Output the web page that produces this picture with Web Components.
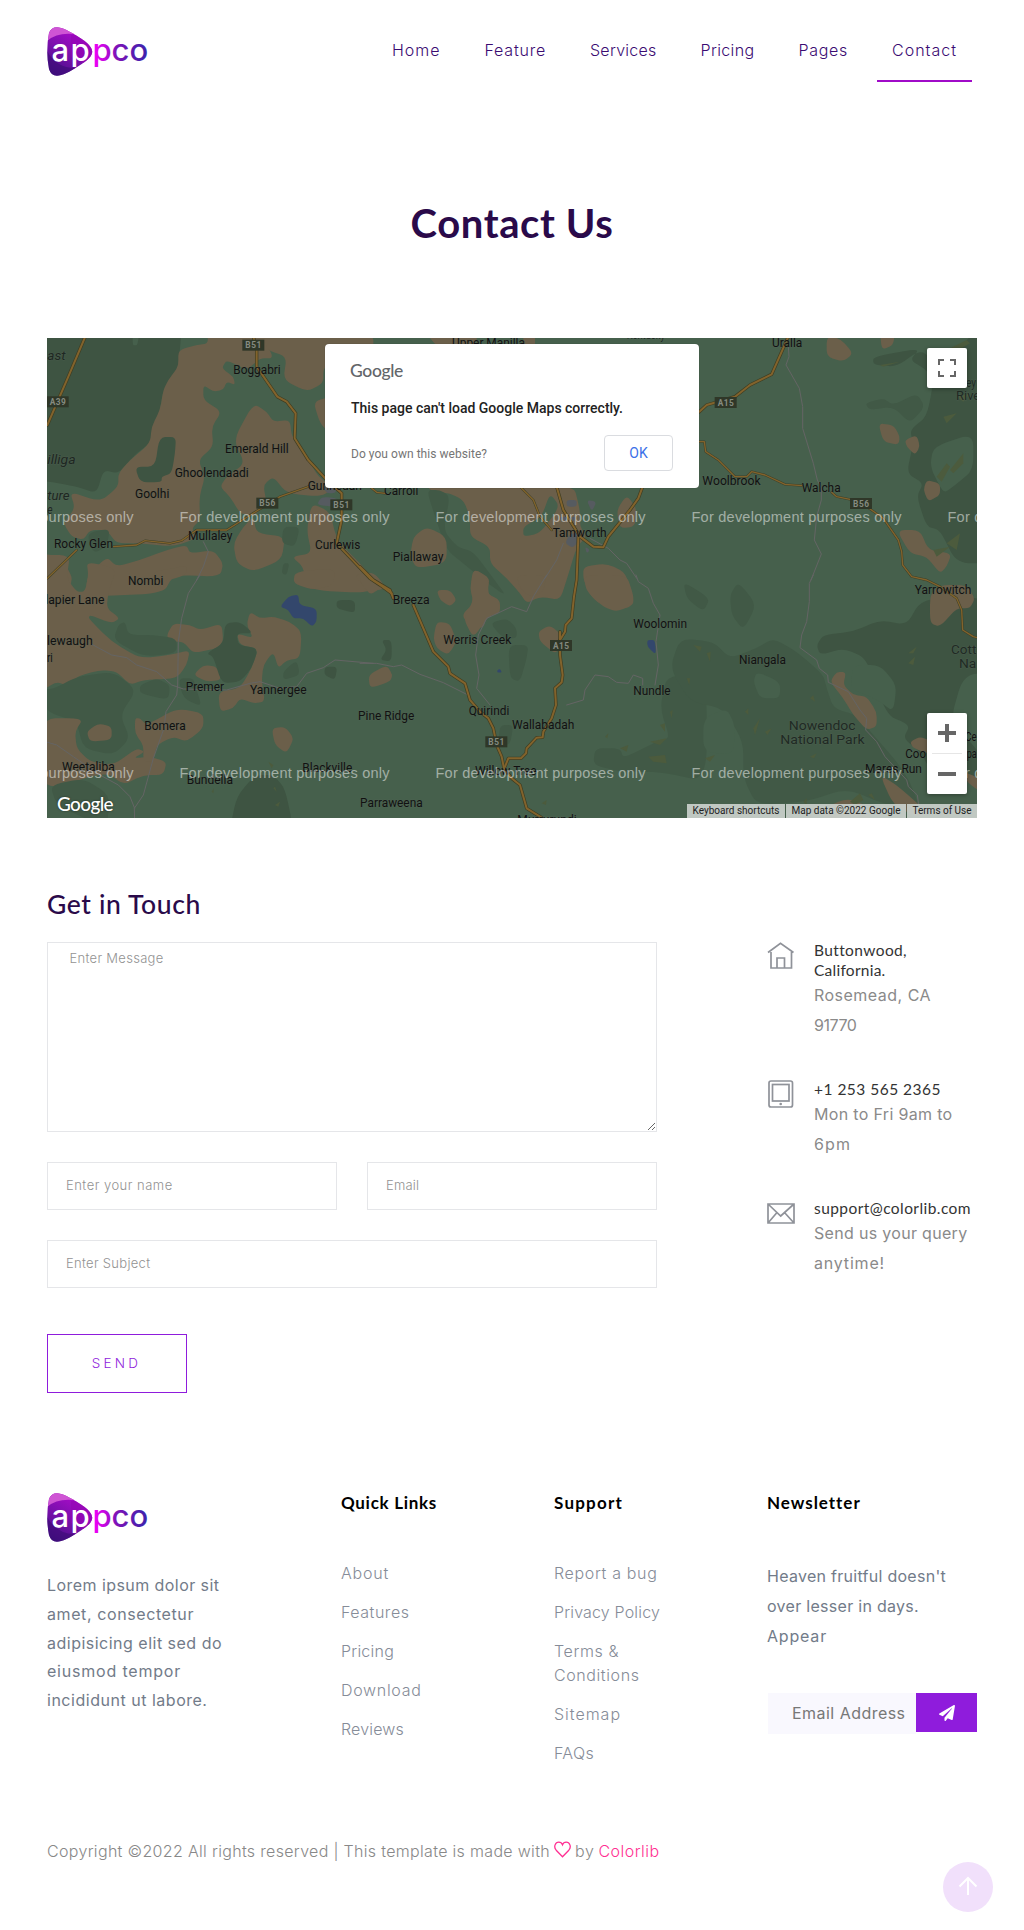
<!DOCTYPE html>
<html lang="en">
<head>
<meta charset="utf-8">
<title>Appco | Contact</title>
<style>
html,body{margin:0;background:#fff}
body{width:1024px;height:1930px;position:relative;overflow:hidden;font:300 16px/30px Inter,"Noto Sans",sans-serif;color:#888}
</style>
</head>
<body>
<contact-page></contact-page>
<script>
const define = (name, html, ready) => customElements.define(name, class extends HTMLElement {
  constructor() {
    super();
    const t = document.createElement('template');
    t.innerHTML = html;
    this.attachShadow({mode: 'open'}).append(t.content.cloneNode(true));
  }
  connectedCallback() { if (ready) ready(this, this.shadowRoot); }
});

/* ---------- map artwork: six tiles, three drawing units per pixel ---------- */
const TILE = {A:[40,330],B:[360,330],C:[680,330],D:[40,575],E:[360,575],F:[680,575]};
const DARK='#3e5442', SHADE='#415946', GREEN='#46604c', TAN='#6b5f4a', BLUE='#33476c', TOWN='#565b60', OLIVE='#4c5b3d';
const LAND = [
 ['A',DARK,'-200 -200 440 -200 420 60 410 140 370 180 360 240 340 290 330 340 290 370 270 390 235 430 190 420 170 490 110 470 0 450 -200 450'],
 ['A',TAN,'500 0 505 40 470 45 415 60 415 110 385 150 370 180 360 240 335 290 330 340 270 390 235 430 235 470 180 515 90 485 105 535 70 580 95 620 130 630 150 600 200 600 230 640 300 640 400 650 470 625 455 595 480 570 478 500 495 440 475 390 520 350 515 290 545 245 490 210 490 165 520 185 550 180 560 155 585 165 580 140 545 115 560 90 620 120 660 85 700 85 680 40 670 0'],
 ['A',TAN,'670 0 680 60 740 80 730 150 800 185 850 160 850 115 890 80 1000 90 1000 0'],
 ['A',TAN,'640 220 680 245 700 275 750 270 755 320 800 380 835 440 885 475 840 500 740 490 700 440 670 465 680 520 640 560 600 550 570 500 540 470 560 440 615 400 580 330'],
 ['A',TAN,'580 640 610 590 640 560 650 610 735 620 725 690 640 725 590 700'],
 ['A',TAN,'815 520 870 545 890 630 990 730 1000 790 800 780 790 710 755 680 815 670 800 600'],
 ['A',TAN,'140 740 200 680 230 710 300 690 380 660 440 645 450 670 520 660 550 700 540 740 400 735 370 790 140 800'],
 ['A',TAN,'0 670 65 680 105 760 0 860'],
 ['A',TAN,'820 215 870 200 870 310 840 280'],
 ['A',DARK,'358 322 408 320 405 370 395 430 365 440 365 457 300 457 285 410 345 410'],
 ['A',SHADE,'140 610 210 595 200 650 160 670'],['A',SHADE,'730 590 780 590 765 650 725 640'],['A',SHADE,'730 700 748 700 740 735 725 730'],
 ['A',GREEN,'278 10 298 10 292 46 278 46'],
 ['A',TOWN,'845 500 895 505 880 530 830 525'],['A',TOWN,'850 470 895 470 885 490 860 490'],
 ['D',TAN,'0 -60 90 -60 80 10 110 50 135 50 145 0 140 -40 230 -20 205 50 200 100 240 130 215 145 150 120 145 130 215 200 300 250 390 240 450 225 440 270 410 310 310 315 270 330 230 290 180 285 110 305 90 335 50 320 0 350'],
 ['D',TAN,'340 -10 400 -20 440 -30 440 0 350 25'],
 ['D',TAN,'380 180 400 145 450 150 480 165 545 145 550 200 530 220 460 235 430 200 390 200'],
 ['D',TAN,'460 300 490 270 530 275 545 315 500 320'],
 ['D',TAN,'620 150 630 110 660 130 700 125 750 140 785 170 780 250 740 255 715 280 700 230 670 270 665 320 675 380 640 385 600 370 580 400 540 410 535 350 600 340 635 280 655 220 600 210 590 175 640 190'],
 ['D',DARK,'555 145 600 140 640 175 590 175 595 210 655 220 635 280 600 320 545 325 520 245 500 235 550 205'],
 ['D',SHADE,'235 150 255 140 265 180 340 180 410 190 410 235 310 245 220 195'],['D',SHADE,'45 340 110 305 220 290 290 345 240 420 270 490 220 540 130 520 110 440 20 410 0 345'],
 ['D',SHADE,'300 330 350 310 390 330 385 375 300 355'],['D',SHADE,'415 310 460 310 470 345 485 395 430 370'],['D',SHADE,'730 290 770 255 780 300 730 315'],
 ['D',DARK,'855 275 892 275 885 315 853 300'],['D',DARK,'890 75 945 75 945 115 890 100'],
 ['D',TAN,'0 430 130 430 105 470 110 520 150 560 220 570 290 520 315 530 280 550 330 545 380 560 370 600 310 600 250 630 200 590 0 650'],
 ['D',TAN,'285 430 300 430 320 450 410 400 490 415 490 460 440 500 400 485 350 510 340 560 310 560 310 510 285 475'],
 ['D',TAN,'140 470 175 445 215 455 215 495 150 500'],['D',TAN,'695 460 735 455 762 490 740 535 705 510'],
 ['D',TAN,'765 -10 885 -20 880 30 820 45 760 25'],['D',TAN,'940 0 1000 -10 1040 40 990 50'],
 ['D',DARK,'645 600 700 600 735 640 760 760 570 760 590 665'],['D',SHADE,'30 630 130 610 210 660 200 760 50 690'],
 ['D',BLUE,'720 95 745 65 775 58 778 90 830 100 830 140 815 155 790 130 760 130 745 105'],
 ['B',TAN,'190 0 350 0 350 45 240 60'],['B',TAN,'490 0 525 0 525 60 490 50'],
 ['B',TAN,'200 470 640 460 660 540 660 590 680 620 650 650 620 750 600 810 540 800 500 820 480 790 440 745 390 700 390 650 330 620 330 560 310 510 270 490 220 485'],
 ['B',GREEN,'570 490 600 530 540 610 490 620 490 590 545 560'],
 ['B',SHADE,'200 480 240 480 270 500 250 600 290 650 340 665 400 745 440 800 370 750 310 700 260 660 225 560'],
 ['B',TAN,'160 620 200 590 260 620 260 700 170 715 150 680'],
 ['B',TAN,'770 540 800 495 830 535 825 590 780 595'],
 ['B',TAN,'670 710 740 700 800 730 820 830 760 840 700 810 670 750'],
 ['B',TAN,'340 715 390 745 380 790 420 810 420 850 380 860 370 895 330 890 305 855 340 820'],
 ['B',TOWN,'620 510 650 510 650 530 620 530'],['B',TOWN,'680 510 710 515 695 545'],['B',TOWN,'600 560 650 560 640 575 600 570'],['B',TOWN,'630 610 670 610 640 655 615 640'],['B',TOWN,'675 650 690 660 680 670'],
 ['E',TAN,'0 -10 60 10 60 40 30 60 0 20'],['E',TAN,'230 45 270 45 290 75 270 95 240 75'],['E',TAN,'230 140 270 145 290 200 265 240 230 220 220 190'],
 ['E',TAN,'25 300 80 270 98 300 90 320 30 340'],['E',TAN,'340 -20 385 10 385 60 415 80 420 105 380 130 340 190 310 130 340 80 330 40'],
 ['E',TAN,'470 0 560 0 550 50 510 65 480 40'],['E',TAN,'670 0 800 0 820 60 820 90 770 110 730 95 680 50'],['E',TAN,'535 170 570 150 605 180 590 240 540 200'],
 ['E',SHADE,'390 145 440 130 470 160 470 190 430 190'],['E',SHADE,'445 210 505 210 500 250 480 320 450 310'],['E',DARK,'65 195 95 195 95 260 60 255 80 225'],
 ['E',SHADE,'420 450 460 450 450 510 415 510'],['E',SHADE,'920 300 1040 310 1040 620 900 590 780 590 700 570 705 520 780 520 790 550 890 500 930 490 900 400'],
 ['E',BLUE,'862 195 885 195 888 240 862 215'],['E',BLUE,'412 285 420 282 426 292 412 293'],
 ['C',DARK,'890 0 820 70 760 90 720 60 650 110 580 105 580 80 720 55 690 90 740 120 760 160 740 260 690 300 700 340 680 430 730 460 710 500 740 590 780 600 830 700 960 700 960 0'],
 ['C',SHADE,'555 220 610 205 640 225 710 190 735 230 690 280 640 230 570 240'],['C',GREEN,'760 350 880 310 880 420 820 470 790 490 750 410'],
 ['C',TAN,'440 20 480 25 520 70 490 95 440 80'],['C',TAN,'600 0 645 0 640 45 605 60'],['C',TAN,'595 280 640 285 660 320 655 345 610 335'],['C',TAN,'675 330 710 315 720 350 705 375 680 350'],['C',TAN,'740 450 780 460 780 495 745 515 730 480'],
 ['C',TAN,'650 600 720 600 745 660 815 670 800 710 780 730 740 680 690 670'],
 ['F',DARK,'410 210 430 180 520 170 600 135 680 150 720 80 820 60 960 80 960 290 850 300 810 440 890 520 960 640 760 600 720 530 670 490 690 450 620 420 560 250 490 220 420 240'],
 ['F',SHADE,'0 190 100 200 150 250 230 220 280 190 350 230 430 300 440 340 460 400 530 420 580 480 650 560 690 620 720 700 620 690 500 640 380 680 230 690 190 610 190 500 130 400 30 380 -30 280'],
 ['F',GREEN,'220 320 230 290 300 320 300 370 240 370'],['F',GREEN,'70 430 140 400 165 450 160 540 70 530'],
 ['F',SHADE,'150 60 175 20 230 90 190 165 155 120'],['F',SHADE,'10 20 90 70 70 110 20 70'],
 ['F',GREEN,'520 270 600 270 650 330 640 410 600 380 560 360 510 340'],
 ['F',TAN,'750 60 780 30 860 30 885 70 870 100 830 100 780 155 750 145'],
 ['F',TAN,'450 320 470 290 498 292 490 330 520 360 560 365 590 410 590 455 560 465 520 420 490 370'],
 ['F',TAN,'690 500 720 485 760 500 760 540 700 520'],['F',TAN,'600 600 650 630 740 710 720 730 640 690'],['F',TAN,'430 700 500 670 560 690 570 740 430 740'],['F',TAN,'850 590 900 610 900 650 860 620'],
];
const SHARDS = [
 ['C','780 70 860 30 870 40 800 80'],['C','830 200 870 190 850 215'],['C','770 440 800 400 810 410 785 455'],['C','810 420 850 370 850 400 820 430'],['C','800 640 840 610 830 660'],['C','760 660 810 650 770 680'],['C','600 105 660 95 610 110'],['C','790 260 830 250 800 280'],
 ['F','685 235 710 215 700 235'],['F','685 265 705 245 700 270'],['F','40 210 65 215 60 230'],['F','80 235 92 230 90 260'],['F','20 310 30 310 28 330'],['F','195 410 205 400 205 420'],['F','220 460 240 430 225 480'],['F','255 470 275 460 262 480'],['F','390 370 400 360 405 380'],['F','75 550 105 540 90 560'],['F','390 545 410 535 402 550'],['F','510 680 540 655 550 675 525 690'],['F','565 660 575 655 585 675'],['F','370 680 380 670 380 690'],
 ['E','870 500 920 490 900 510'],['E','865 545 915 540 920 565 880 560'],['E','900 450 915 445 915 470'],['E','780 520 805 510 800 530'],['E','735 485 745 475 742 490'],['E','930 410 938 405 935 430'],['E','545 685 560 675 558 690'],
 ['D','685 560 700 570 695 580'],['D','700 640 705 635 710 650'],['D','705 690 720 680 715 695'],['D','515 650 522 640 520 655'],
];
const MINOR = [
 ['A','490 635 505 665 490 710 470 750'],['D','480 0 445 55 425 130 415 200 413 330 410 360 378 410 372 460 340 550 310 660 283 700 284 740'],
 ['D','150 205 215 240 260 248 290 270 350 290 395 330 430 342 560 345 630 325 660 320 720 340 770 335 800 295 850 278 885 255 1000 265'],
 ['D','0 495 50 510 100 545 180 600 235 630 270 665 284 700'],
 ['E','0 265 50 265 100 275 125 270 180 298 250 323 320 358'],['E','560 0 520 65 500 110 455 95 380 130 355 180 347 240 357 300 350 340 390 390'],
 ['E','828 0 835 20 865 40 880 85 900 120 888 200 895 270 885 330'],['E','620 390 670 375 675 345 705 300 745 305 770 322 805 325 820 300 848 310 848 330'],
 ['B','610 640 590 690 555 745'],['B','690 625 745 655 780 690 800 700 830 745'],
 ['C','325 50 327 80 318 105 358 175 368 230 368 295 400 400 412 450 424 475 424 510 410 560 403 630 424 672 393 750'],
 ['F','400 0 388 25 388 80 380 140 365 180 360 218 410 255 418 280 443 300 445 322 505 350 540 405 560 430 557 465 590 500 615 545 680 615 685 635 712 660 720 720'],
];
const MAJOR = [
 ['A','134 24 85 140 22 285'],['A','640 20 650 60 650 110 712 200 740 215 767 250 764 325 805 390 860 450 905 490 905 570 890 640 990 745 1020 765 1055 790'],
 ['B','590 470 610 540 660 620 700 650 730 652 745 620 810 540 835 505 848 470'],['B','655 620 650 750 642 800 635 865 617 885 615 905 600 930'],
 ['B','0 710 40 750 90 780 100 805'],
 ['C','58 245 80 225 165 200 210 165 275 133 325 20'],
 ['E','160 90 220 230 265 275 270 295 315 325 330 375 360 410 385 430 400 460 410 510 425 545 432 580 455 610 480 630 500 700 545 728'],
 ['E','600 170 600 240 608 300 605 322 585 340 588 390 575 430 550 470 548 487 530 488 500 520 498 535 483 550 445 550 435 575'],
];
const MIDDLE = [
 ['A','22 745 110 660'],['A','220 650 290 645 315 632 390 640 425 632 470 600 560 600 655 540 720 500 805 470'],
 ['B','480 470 520 510 540 560 575 600'],['B','30 470 50 487 75 490'],
 ['C','58 335 73 335 77 365 115 390 165 440 200 440 215 425 255 435 315 463 365 467'],['C','455 487 470 500 510 508 560 530 610 565 655 630 665 665 668 705 695 740 740 750 780 770 830 805 845 840 848 900 880 920 900 925'],
];
/* tile, x, baseline, right edge (0 = natural width), text, class */
const LABELS = [
 ['A',580,131,722,'Boggabri'],['A',555,369,746,'Emerald Hill'],['A',404,440,626,'Ghoolendaadi'],['A',285,503,388,'Goolhi'],['A',803,480,966,'Gunnedah'],['A',444,629,577,'Mullaley'],['A',42,653,219,'Rocky Glen'],['A',825,656,961,'Curlewis'],
 ['A',22,89,77,'ast','p'],['A',22,402,107,'illiga','p'],['A',22,509,89,'ture','p'],['A',22,552,38,'e','p'],
 ['B',276,51,495,'Upper Manilla'],['B',72,496,175,'Carroll'],['B',578,622,740,'Tamworth'],['B',98,694,250,'Piallaway'],['B',800,26,915,'Kentucky','n'],
 ['C',276,52,367,'Uralla'],['C',67,465,242,'Woolbrook'],['C',365,486,482,'Walcha'],['C',858,170,888,'ey','n'],['C',828,210,0,'River','n'],
 ['D',264,30,370,'Nombi'],['D',16,88,193,'lapier Lane'],['D',21,211,158,'lewaugh'],['D',21,260,38,'ri'],['D',437,347,552,'Premer'],['D',630,356,800,'Yannergee'],['D',313,464,437,'Bomera'],['D',66,587,224,'Weetaliba'],['D',440,627,579,'Bundella'],['D',787,590,937,'Blackville'],
 ['E',98,88,209,'Breeza'],['E',250,206,454,'Werris Creek'],['E',326,420,448,'Quirindi'],['E',456,462,643,'Wallabadah'],['E',820,158,981,'Woolomin'],['E',820,359,932,'Nundle'],['E',-6,436,163,'Pine Ridge'],['E',0,697,188,'Parraweena'],['E',345,600,530,'Willow Tree'],['E',472,746,650,'Murrurundi'],
 ['F',177,267,318,'Niangala'],['F',704,58,874,'Yarrowitch'],['F',813,238,889,'Cott','n'],['F',837,280,889,'Na','n'],['F',326,465,527,'Nowendoc','n'],['F',301,507,554,'National Park','n'],['F',676,550,738,'Coo'],['F',860,550,890,'pa'],['F',856,498,890,'Ce'],['F',555,595,726,'Mares Run'],
];
const SHIELDS = [['A',53,216,'A39'],['A',640,46,'B51'],['A',682,520,'B56'],['A',904,525,'B51'],['C',137,218,'A15'],['C',543,521,'B56'],['E',603,212,'A15'],['E',409,501,'B51']];

const pairs = s => { const n = s.split(' ').map(Number), r = []; for (let i = 0; i < n.length; i += 2) r.push([n[i], n[i+1]]); return r; };
const blob = s => {
  const p = pairs(s), mid = (a, b) => [(a[0]+b[0])/2, (a[1]+b[1])/2];
  let d = 'M' + mid(p[p.length-1], p[0]);
  p.forEach((q, i) => { const a = p[(i || p.length)-1], b = p[(i+1)%p.length];
    const u = [q[0]*.65+a[0]*.35, q[1]*.65+a[1]*.35], v = [q[0]*.65+b[0]*.35, q[1]*.65+b[1]*.35];
    d += 'L' + u + 'Q' + q + ' ' + v; });
  return d + 'Z';
};
const tile = (k, s) => `<g transform="translate(${TILE[k]}) scale(.33333)">${s}</g>`;
const line = (l, c, w) => l.map(([k, s]) => tile(k, `<polyline points="${s}" fill="none" stroke="${c}" stroke-width="${w}" stroke-linejoin="round" stroke-linecap="round"/>`)).join('');
const mapArt = () => `<svg viewBox="47 338 930 480" width="930" height="480">
 <rect x="47" y="338" width="930" height="480" fill="${GREEN}"/>
 ${LAND.map(([k, c, s]) => tile(k, `<path d="${blob(s)}" fill="${c}"/>`)).join('')}
 ${SHARDS.map(([k, s]) => tile(k, `<polygon points="${s}" fill="${OLIVE}"/>`)).join('')}
 ${line(MINOR, '#646464', 3)}${line(MIDDLE, '#3e4028', 7)}${line(MIDDLE, '#82632c', 4)}${line(MAJOR, '#3f3d22', 10)}${line(MAJOR, '#82632c', 6)}
 ${SHIELDS.map(([k, x, y, t]) => tile(k, `<rect x="${x-33}" y="${y-17}" width="66" height="33" fill="#2f3728"/><text x="${x-24}" y="${y+9}" textLength="48" class="s">${t}</text>`)).join('')}
 ${LABELS.map(([k, x, y, e, t, c]) => tile(k, `<text x="${x}" y="${y}" class="${c || ''}" ${e ? `textLength="${e-x}" lengthAdjust="spacingAndGlyphs"` : ''}>${t}</text>`)).join('')}
 ${[522, 778].map(y => [-76, 180, 436, 692, 948].map(x => `<text class="w" x="${x-.5}" y="${y}" textLength="210">For development purposes only</text>`).join('')).join('')}
</svg>`;

define('app-logo', `<style>:host{display:block;width:100px;height:49px}svg{display:block}text{font:500 31px Inter,sans-serif}</style>
<svg width="102" height="49" viewBox="0 0 102 49"><defs>
<linearGradient id="body" x1=".1" y1="1" x2=".65" y2="0"><stop offset="0" stop-color="#3d0f80"/><stop offset=".45" stop-color="#7410a8"/><stop offset="1" stop-color="#b40bd0"/></linearGradient>
<linearGradient id="ink" gradientUnits="userSpaceOnUse" x1="47" y1="0" x2="101" y2="0"><stop offset="0" stop-color="#f000f5"/><stop offset=".2" stop-color="#c408e0"/><stop offset=".4" stop-color="#8012b8"/><stop offset="1" stop-color="#3b23ac"/></linearGradient>
<clipPath id="edge"><path d="M2 6Q4 .2 10 .2Q17 .2 34 11.500Q41 16 43.500 20Q47 24.500 43.500 29.500Q41 33 34 37.500Q17 48.800 10 48.800Q4 48.800 2 42Q-1.500 24 2 6Z"/></clipPath></defs>
<g clip-path="url(#edge)"><rect width="48" height="50" fill="url(#body)"/><path d="M0 14Q12 4 32 8V0H0Z" fill="#cf55d4"/><path d="M24 8V30L48 42V8Z" fill="#9406b4" opacity=".65"/><path d="M0 24Q10 42 30 41L22 50H0Z" fill="#3a0c75" opacity=".6"/></g>
<text y="34" x="4.500 23.500 45.500 64.500 82.500"><tspan fill="#fff">ap</tspan><tspan fill="url(#ink)">pco</tspan></text></svg>`);

define('nav-link', `<style>:host{display:block;box-sizing:border-box;height:82px;padding:35px 15px 0;color:#3b0b72;border-bottom:2px solid transparent;white-space:nowrap}:host([active]){border-color:#a00bc8}</style><slot></slot>`);

define('site-header', `<style>:host{display:flex;justify-content:space-between;height:100px;padding:0 52px 0 47px}app-logo{margin-top:27px}nav{display:flex;gap:14px}</style>
<app-logo></app-logo><nav>
<nav-link><fit-text w="48.5">Home</fit-text></nav-link><nav-link><fit-text w="61.5">Feature</fit-text></nav-link><nav-link><fit-text w="66.5">Services</fit-text></nav-link><nav-link><fit-text w="54">Pricing</fit-text></nav-link><nav-link><fit-text w="49.5">Pages</fit-text></nav-link><nav-link active><fit-text w="65">Contact</fit-text></nav-link></nav>`);

define('page-hero', `<style>:host{display:block;height:138px;padding-top:100px;text-align:center}h1{margin:0;font:700 40px/47px Lato,sans-serif;color:#2a0a4a}</style><h1><slot></slot></h1>`);

define('map-dialog', `<style>:host{display:block;box-sizing:border-box;width:374px;height:144px;padding:15px 26px 0;background:#fff;border-radius:4px;font-family:Roboto,sans-serif;box-shadow:0 0 1px #0006}
.g{font:500 17.5px/24px Lato,sans-serif;color:#63666a;margin-left:-1px}.m{font-weight:500;font-size:14px;line-height:20px;color:#222;margin-top:15px}.r{display:flex;justify-content:space-between;align-items:center;margin-top:17px}.q{font-size:12px;font-weight:400;color:#757575;margin-top:2px}
button{box-sizing:border-box;width:69px;height:36px;background:#fff;border:1px solid #dadce0;border-radius:4px;font:400 14px Roboto,sans-serif;color:#3c70e8;padding:1px 0 0}</style>
<div class="g"><fit-text w="53">Google</fit-text></div><div class="m"><fit-text w="272">This page can't load Google Maps correctly.</fit-text></div>
<div class="r"><span class="q"><fit-text w="136">Do you own this website?</fit-text></span><button>OK</button></div>`);

define('map-view', `<style>:host{display:block;position:relative;margin-left:47px;width:930px;height:480px;overflow:hidden}svg{display:block}
text{font:400 36.500px Roboto,sans-serif;fill:#111;stroke:#59675a;stroke-width:3px;stroke-opacity:.4;paint-order:stroke}
.p{font-style:italic;font-size:38px;fill:#1e2722}.n{font-size:39px;fill:#202a24}.s{font-size:25px;font-weight:700;fill:#858b80;stroke:none}
.w{font:400 14.500px "Liberation Sans",sans-serif;fill:#fff;fill-opacity:.5;stroke:none}
map-dialog{position:absolute;left:278px;top:5.500px}
.full,.zoom{position:absolute;right:10px;width:40px;background:#fff;border-radius:2px;box-shadow:0 1px 4px #0005}.full{top:10px;height:40px}.zoom{bottom:24px;height:81px}
.brand{position:absolute;left:10px;bottom:1.500px;font:500 19px/26px Lato,sans-serif;color:#fff;text-shadow:0 0 2px #0008}
.legal{position:absolute;right:0;bottom:0;display:flex;gap:1px;font:400 10px/14px Roboto,sans-serif;color:#222}.legal span{background:#c9d0caee;padding:0 5.500px;height:14px}</style>
${mapArt()}
<map-dialog></map-dialog>
<div class="full"><svg width="40" height="40" fill="none" stroke="#666" stroke-width="2"><path d="M12 17V12H17M23 12H28V17M28 23V28H23M17 28H12V23"/></svg></div>
<div class="zoom"><svg width="40" height="81"><path d="M11 20H29M20 11V29M11 61H29" stroke="#666" stroke-width="4"/><path d="M5 40.500H35" stroke="#e6e6e6"/></svg></div>
<div class="brand"><fit-text w="56">Google</fit-text></div>
<div class="legal"><span><fit-text w="87">Keyboard shortcuts</fit-text></span><span><fit-text w="109">Map data ©2022 Google</fit-text></span><span><fit-text w="59">Terms of Use</fit-text></span></div>`);

define('contact-form', `<style>:host{display:flex;flex-direction:column;gap:30px;width:610px}
textarea,input{box-sizing:border-box;display:block;width:100%;margin:0;border:1px solid #e5e6e9;border-radius:0;background:#fff;outline:0;font:300 13px/18px Inter,sans-serif}
::placeholder{color:#929292;opacity:1}textarea{height:190px;padding:6px 21.500px;resize:both}input{height:48px;padding:0 18px 2px}.row{display:grid;grid-template-columns:1fr 1fr;gap:30px}
textarea{letter-spacing:.3px}.a{letter-spacing:.49px}.b{letter-spacing:.3px}.c{letter-spacing:.2px}
button{box-sizing:border-box;width:140px;height:59px;margin-top:16px;border:1px solid #8f1cdc;background:#fff;color:#8f1cdc;font:300 13.500px Inter,sans-serif;letter-spacing:3.200px;padding:0 1px 2px 0}</style>
<textarea placeholder="Enter Message"></textarea><div class="row"><input class="a" placeholder="Enter your name"><input class="c" placeholder="Email"></div><input class="b" placeholder="Enter Subject"><div><button>SEND</button></div>`);

define('info-item', `<style>:host{display:grid;grid-template-columns:28px 1fr;column-gap:19px}h3{margin:0;font:400 15.500px/20px Lato,sans-serif;color:#333}p{margin:0;font-weight:400;color:#8a8a8a}::slotted(svg){display:block}</style>
<div><slot name="icon"></slot></div><div><h3><slot name="title"></slot></h3><p><slot></slot></p></div>`);

define('contact-info', `<style>:host{display:flex;flex-direction:column;gap:39px;width:210px;margin-top:-2px;white-space:nowrap}svg{fill:none;stroke:#8f9299;stroke-width:1.700}</style>
<info-item><svg slot="icon" width="28" height="31"><path d="M1 12.500 13.500 3.300 26.500 12.500M4 12V28H24.500V12M10 28V18H17.500V28"/></svg>
<span slot="title"><fit-text w="92.5">Buttonwood,</fit-text><br><fit-text w="71.5">California.</fit-text></span><fit-text w="117">Rosemead, CA</fit-text><br><fit-text w="42.5">91770</fit-text></info-item>
<info-item><svg slot="icon" width="28" height="31"><rect x="2" y="2" width="23.500" height="26" rx="2"/><rect x="5.500" y="5.500" width="16.500" height="16.500"/><circle cx="13.700" cy="25" r="1.300" fill="#8f9299" stroke="none"/></svg>
<span slot="title"><fit-text w="127">+1 253 565 2365</fit-text></span><fit-text w="138.5">Mon to Fri 9am to</fit-text><br><fit-text w="37">6pm</fit-text></info-item>
<info-item><svg slot="icon" width="28" height="31"><path d="M1 6H27V25H1ZM1 6 13.700 18 27 6M1 25 10 14.500M27 25 17.500 14.500"/></svg>
<span slot="title"><fit-text w="157">support@colorlib.com</fit-text></span><fit-text w="153.5">Send us your query</fit-text><br><fit-text w="71">anytime!</fit-text></info-item>`);

define('contact-section', `<style>:host{display:block;margin:68px 47px 0}h2{height:56px;margin:0;font:500 26.500px/36px Lato,sans-serif;color:#2a0a4a}.row{display:flex;justify-content:space-between}</style>
<h2><fit-text w="154">Get in Touch</fit-text></h2><div class="row"><contact-form></contact-form><contact-info></contact-info></div>`);

define('footer-column', `<style>:host{display:block}h4{margin:-1px 0 47px;font:700 17px/22px Lato,sans-serif;color:#000}</style><h4><slot name="title"></slot></h4><slot></slot>`);

define('link-list', `<style>:host{display:flex;flex-direction:column;gap:15px;line-height:24px;color:#868c98}</style><slot></slot>`);

define('news-form', `<style>:host{display:flex;margin:42px 0 0 1px;height:41px}span{box-sizing:border-box;width:148px;height:41px;background:#f9f8fe;padding:5px 0 0 24px;color:#777;font-weight:400}b{display:grid;place-items:center;width:61px;height:39px;background:#8f1cdc}</style>
<span><fit-text w="113.5">Email Address</fit-text></span><b><svg width="16" height="16" viewBox="0 0 512 512" fill="#fff"><path d="M476 3 12 271c-18 10-16 35 2 43l106 45L408 105c5-5 13 2 8 8L175 407v81c0 23 28 33 42 15l63-77 125 52c14 6 30-3 33-18l72-432c3-20-18-35-34-25z"/></svg></b>`);

define('site-footer', `<style>:host{display:block;margin:100px 47px 0;white-space:nowrap}.cols{display:grid;grid-template-columns:294px 213px 213px 210px;height:343px}p{margin:0;font-weight:400;color:#727b89}.about{margin-top:29px;line-height:28.800px}.copy{display:flex;gap:4px;color:#888}.copy svg{margin-top:5px}.pink{color:#ff2f92}</style>
<div class="cols"><div><app-logo></app-logo><p class="about"><fit-text w="172.5">Lorem ipsum dolor sit</fit-text><br><fit-text w="147">amet, consectetur</fit-text><br><fit-text w="175">adipisicing elit sed do</fit-text><br><fit-text w="134">eiusmod tempor</fit-text><br><fit-text w="160.5">incididunt ut labore.</fit-text></p></div>
<footer-column><fit-text slot="title" w="96">Quick Links</fit-text><link-list><fit-text w="48">About</fit-text><fit-text w="68.5">Features</fit-text><fit-text w="53">Pricing</fit-text><fit-text w="80.5">Download</fit-text><fit-text w="63">Reviews</fit-text></link-list></footer-column>
<footer-column><fit-text slot="title" w="69">Support</fit-text><link-list><fit-text w="103.5">Report a bug</fit-text><fit-text w="106">Privacy Policy</fit-text><div><fit-text w="65">Terms &amp;</fit-text><br><fit-text w="85.5">Conditions</fit-text></div><fit-text w="67">Sitemap</fit-text><fit-text w="40">FAQs</fit-text></link-list></footer-column>
<footer-column><fit-text slot="title" w="93">Newsletter</fit-text><p><fit-text w="179">Heaven fruitful doesn't</fit-text><br><fit-text w="152">over lesser in days.</fit-text><br><fit-text w="60">Appear</fit-text></p><news-form></news-form></footer-column></div>
<div class="copy"><fit-text w="503">Copyright ©2022 All rights reserved | This template is made with</fit-text><svg width="17" height="18" fill="none" stroke="#ff2f92" stroke-width="1.300"><path d="M8.500 15.700 2.200 9.200C-.8 5.700 1.400 1.200 4.800 1.200 6.700 1.200 8 2.400 8.500 3.700 9 2.400 10.300 1.200 12.200 1.200 15.600 1.200 17.800 5.700 14.800 9.200Z"/></svg><fit-text w="19.5">by</fit-text><span class="pink"><fit-text w="61">Colorlib</fit-text></span></div>`);

define('back-to-top', `<style>:host{position:absolute;left:943px;top:1862px;width:50px;height:50px;border-radius:50%;background:#f1e0fb}svg{display:block}</style><svg width="50" height="50" fill="none" stroke="#fff" stroke-width="2"><path d="M25 33V16M16.500 24.500 25 16 33.500 24.500"/></svg>`);

define('contact-page', `<style>:host{display:block}</style><site-header></site-header><page-hero><fit-text w="203">Contact Us</fit-text></page-hero><map-view></map-view><contact-section></contact-section><site-footer></site-footer><back-to-top></back-to-top>`);

/* Text set to a given advance width by adjusting its tracking. */
define('fit-text', `<style>:host{display:inline-block;white-space:pre;align-self:flex-start}span{display:inline-block}</style><span><slot></slot></span>`, (host, root) => {
  const span = root.querySelector('span'), w = +host.getAttribute('w');
  span.style.letterSpacing = '0px';
  const extra = (w - span.getBoundingClientRect().width) / host.textContent.length;
  span.style.letterSpacing = extra + 'px';
  host.style.width = w + 'px';
});
</script>
</body>
</html>
